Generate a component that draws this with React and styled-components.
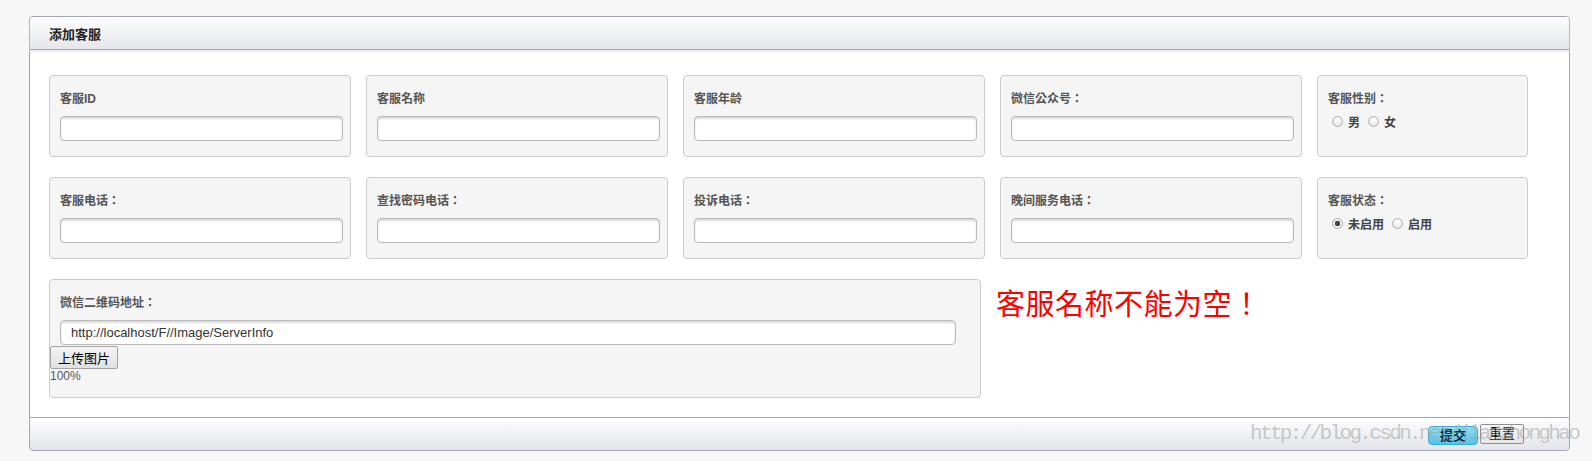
import React, { useState } from "react";
import styled, { createGlobalStyle } from "styled-components";

const GlobalStyle = createGlobalStyle`
  body {
    margin: 0;
    background: #f7f7f7;
    font-family: Arial, "Liberation Sans", "Noto Sans CJK SC", sans-serif;
  }
`;

const CJK = `"Liberation Sans", "Noto Sans CJK TC", sans-serif`;

const fields = [
  [
    { label: "客服ID" },
    { label: "客服名称" },
    { label: "客服年龄" },
    { label: "微信公众号：" },
  ],
  [
    { label: "客服电话：" },
    { label: "查找密码电话：" },
    { label: "投诉电话：" },
    { label: "晚间服务电话：" },
  ],
];

const radios = [
  { label: "客服性别：", name: "sex", options: ["男", "女"], checked: null },
  { label: "客服状态：", name: "state", options: ["未启用", "启用"], checked: 0 },
];

const App = () => {
  const [url, setUrl] = useState("http://localhost/F//Image/ServerInfo");

  return (
    <>
      <GlobalStyle />
      <Page>
        <Panel>
          <Header>添加客服</Header>
          <Body>
            {fields.map((row, i) => (
              <Row key={i}>
                {row.map((f) => (
                  <Card key={f.label}>
                    <Label>{f.label}</Label>
                    <TextInput type="text" />
                  </Card>
                ))}
                <Card narrow>
                  <Label>{radios[i].label}</Label>
                  <RadioRow>
                    {radios[i].options.map((o, k) => (
                      <RadioItem key={o}>
                        <Radio
                          type="radio"
                          name={radios[i].name}
                          defaultChecked={radios[i].checked === k}
                        />
                        {o}
                      </RadioItem>
                    ))}
                  </RadioRow>
                </Card>
              </Row>
            ))}
            <Row>
              <Card wide>
                <Label>微信二维码地址：</Label>
                <TextInput
                  type="text"
                  long
                  value={url}
                  onChange={(e) => setUrl(e.target.value)}
                />
                <UploadButton>上传图片</UploadButton>
                <Progress>100%</Progress>
              </Card>
              <ErrorText>客服名称不能为空！</ErrorText>
            </Row>
          </Body>
          <Footer>
            <SubmitButton>提交</SubmitButton>
            <ResetButton>重置</ResetButton>
          </Footer>
          <Watermark>http://blog.csdn.net/jianzhonghao</Watermark>
        </Panel>
      </Page>
    </>
  );
};

export default App;

const Page = styled.div`
  padding: 16px 0 0 29px;
  height: 445px;
`;

const Panel = styled.div`
  position: relative;
  box-sizing: border-box;
  width: 1541px;
  background: #ffffff;
  border: 1px solid #a2a6b2;
  border-radius: 4px;
`;

const Header = styled.div`
  height: 32px;
  display: flex;
  align-items: center;
  padding-left: 19px;
  border-bottom: 1px solid #a2a6b2;
  border-radius: 4px 4px 0 0;
  background: linear-gradient(#fdfdfe, #e6e7ec);
  box-shadow: 0 2px 2px #ececef;
  font-family: "Liberation Sans", "Noto Sans CJK SC", sans-serif;
  font-size: 13px;
  font-weight: bold;
  color: #222;
`;

const Body = styled.div`
  padding: 25px 0 19px 19px;
  display: flex;
  flex-direction: column;
  gap: 20px;
`;

const Row = styled.div`
  display: flex;
  gap: 15px;
  align-items: flex-start;
`;

const Card = styled.div`
  box-sizing: border-box;
  width: ${({ narrow, wide }) => (narrow ? "211px" : wide ? "932px" : "302px")};
  height: ${({ wide }) => (wide ? "119px" : "82px")};
  padding-top: 14px;
  background: #f5f5f5;
  border: 1px solid #cccccc;
  border-radius: 4px;
`;

const Label = styled.div`
  margin-left: 10px;
  height: 18px;
  line-height: 18px;
  font-family: ${CJK};
  font-size: 12px;
  font-weight: bold;
  color: #555;
`;

const TextInput = styled.input`
  display: block;
  box-sizing: border-box;
  margin: 8px 0 0 10px;
  width: ${({ long }) => (long ? "896px" : "283px")};
  height: 25px;
  padding: 0 10px;
  border: 1px solid #b9b9b9;
  border-radius: 4px;
  background: #ffffff;
  box-shadow: inset 0 2px 2px #dcdcdc;
  font-family: Arial, "Liberation Sans", sans-serif;
  font-size: 13px;
  color: #333;
  outline: none;
`;

const RadioRow = styled.div`
  display: flex;
  align-items: center;
  gap: 8px;
  margin: 5px 0 0 14px;
`;

const RadioItem = styled.label`
  display: flex;
  align-items: center;
  gap: 5px;
  font-family: ${CJK};
  font-size: 12px;
  font-weight: bold;
  color: #444;
`;

const Radio = styled.input`
  appearance: none;
  margin: 0;
  width: 11px;
  height: 11px;
  border-radius: 50%;
  border: 1px solid #b0b0b0;
  background: radial-gradient(circle at 50% 35%, #ffffff, #dedede);
  box-sizing: border-box;
  &:checked {
    background: radial-gradient(circle, #444 0 2.5px, #f3f3f3 3px, #d8d8d8);
  }
`;

const UploadButton = styled.button`
  display: block;
  box-sizing: border-box;
  margin: 1px 0 0 0;
  width: 68px;
  height: 23px;
  padding: 0;
  border: 1px solid #a3a3a3;
  border-radius: 2px;
  background: linear-gradient(#f4f4f4, #e1e1e1);
  font-family: "Liberation Sans", "Noto Sans CJK SC", sans-serif;
  font-size: 13px;
  color: #000;
`;

const Progress = styled.div`
  line-height: 14px;
  font-size: 12px;
  color: #555;
`;

const ErrorText = styled.div`
  margin-top: 3px;
  font-family: "Noto Sans CJK TC", sans-serif;
  font-size: 29px;
  letter-spacing: 0.5px;
  line-height: 40px;
  color: #ff0000;
`;

const Footer = styled.div`
  height: 32px;
  display: flex;
  align-items: center;
  justify-content: flex-end;
  gap: 2px;
  padding-right: 45px;
  border-top: 1px solid #a2a6b2;
  border-radius: 0 0 4px 4px;
  background: linear-gradient(#fdfdfe, #e4e5ea);
`;

const SubmitButton = styled.button`
  box-sizing: border-box;
  width: 50px;
  height: 19px;
  margin-top: 2px;
  padding: 0;
  border: 1px solid #3fa9d4;
  border-radius: 4px;
  background: linear-gradient(#8fe0f8, #4fc4ec);
  font-family: "Liberation Sans", "Noto Sans CJK SC", sans-serif;
  font-size: 13px;
  font-weight: bold;
  line-height: 17px;
  color: #0d2a36;
`;

const ResetButton = styled.button`
  box-sizing: border-box;
  width: 44px;
  height: 20px;
  padding: 0;
  border: 1px solid #8e8e8e;
  border-radius: 2px;
  background: linear-gradient(#fafafa, #e6e6e6);
  font-family: "Liberation Sans", "Noto Sans CJK SC", sans-serif;
  font-size: 13px;
  line-height: 18px;
  color: #111;
`;

const Watermark = styled.div`
  position: absolute;
  left: 1220px;
  top: 405px;
  font-family: "Liberation Mono", monospace;
  font-size: 21px;
  letter-spacing: -2.66px;
  color: rgba(160, 160, 160, 0.55);
  white-space: nowrap;
  pointer-events: none;
`;
